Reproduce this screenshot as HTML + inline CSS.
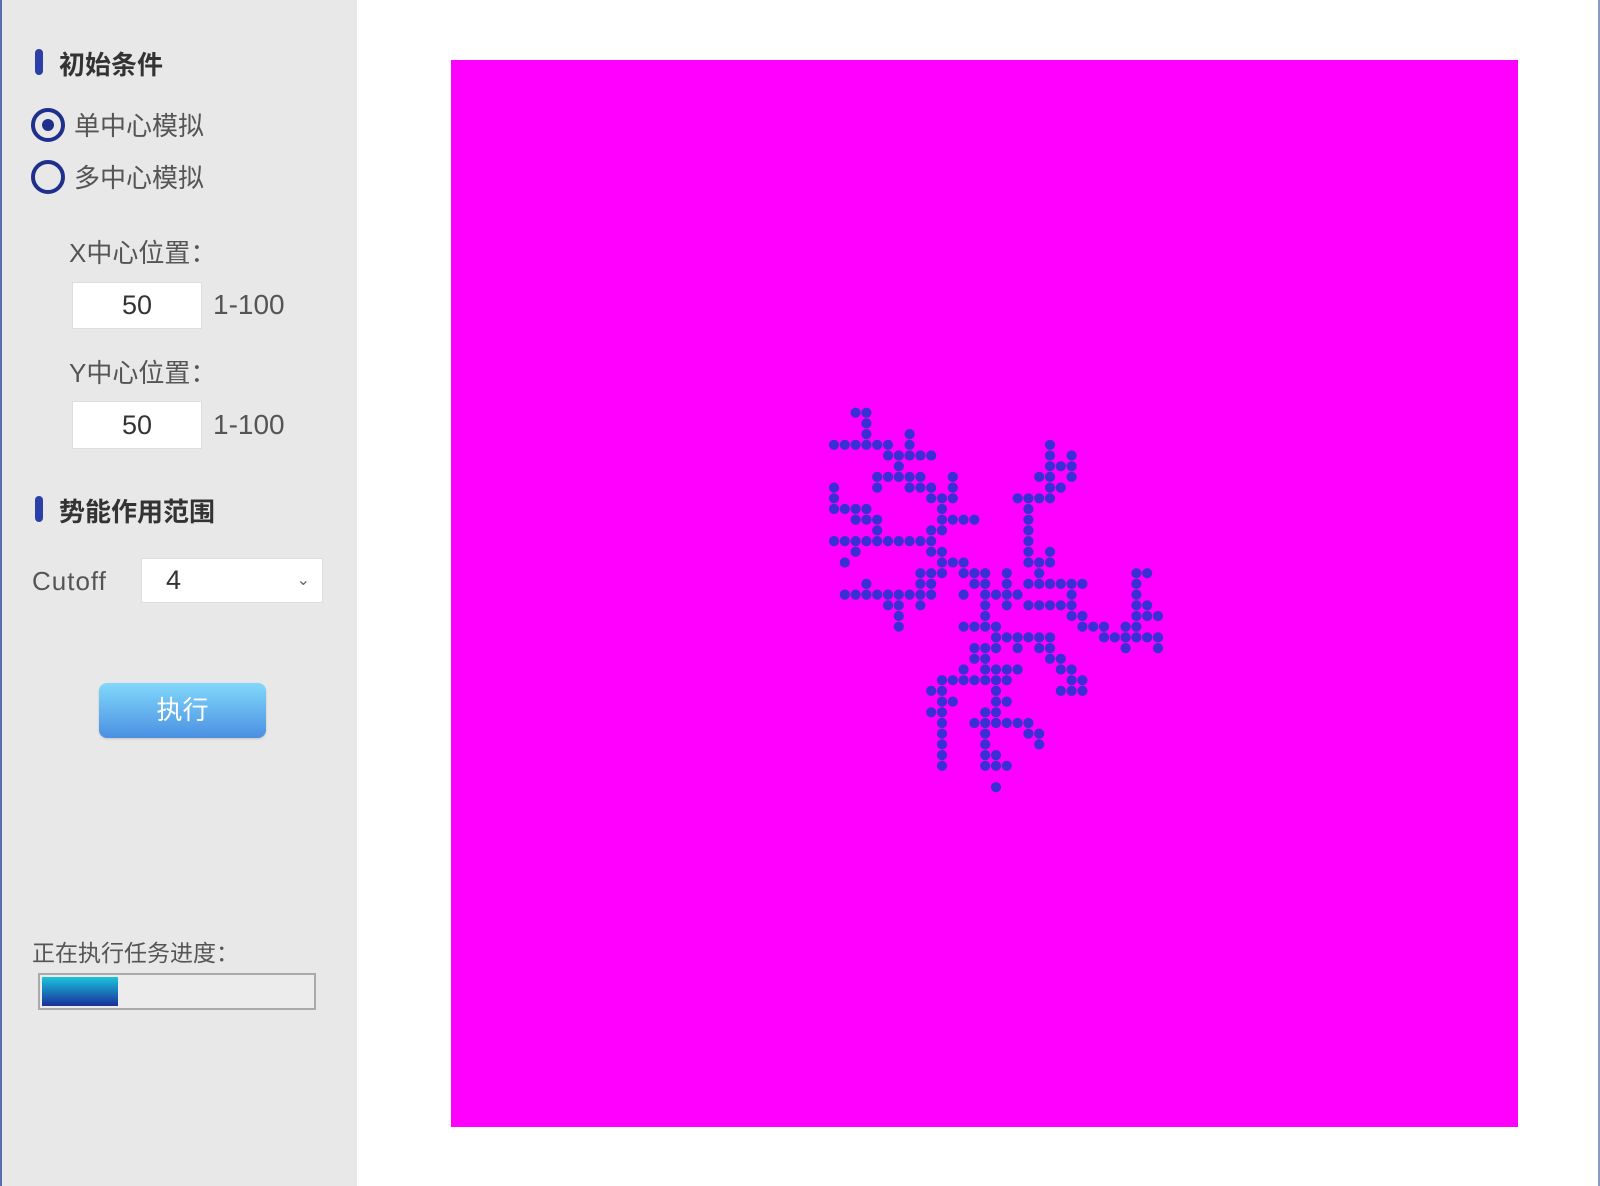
<!DOCTYPE html>
<html><head><meta charset="utf-8">
<style>
html,body{margin:0;padding:0;}
body{width:1600px;height:1186px;position:relative;background:#fff;overflow:hidden;font-family:"Liberation Sans","Noto Sans CJK SC",sans-serif;}
#side{position:absolute;left:0;top:0;width:357px;height:1186px;background:#e8e8e8;border-left:2px solid #5a6bb0;box-sizing:border-box;}
.abs{position:absolute;white-space:nowrap;}
.bar{position:absolute;left:33px;width:8px;height:26px;background:#2a3fa8;border-radius:4px;}
.h{font-weight:bold;font-size:26px;color:#333;}
.t{font-size:26px;color:#555;}
.radio{position:absolute;width:26px;height:26px;border:4px solid #1e2f8c;border-radius:50%;}
.inp{position:absolute;background:#fff;border:1px solid #ddd;font-size:27px;color:#333;text-align:center;box-sizing:border-box;}
#mag{position:absolute;left:451px;top:60px;width:1067px;height:1067px;background:#ff00ff;}
</style></head><body>
<div id="side">
  <div class="bar" style="top:49px"></div>
  <div class="abs h" style="left:57px;top:45px">初始条件</div>
  <div class="radio" style="left:29px;top:108px"><div style="position:absolute;left:7px;top:7px;width:12px;height:12px;border-radius:50%;background:#1e2f8c"></div></div>
  <div class="abs t" style="left:72px;top:106px">单中心模拟</div>
  <div class="radio" style="left:29px;top:160px"></div>
  <div class="abs t" style="left:72px;top:158px">多中心模拟</div>
  <div class="abs t" style="left:67px;top:233px">X中心位置：</div>
  <div class="inp" style="left:70px;top:282px;width:130px;height:47px;line-height:45px">50</div>
  <div class="abs t" style="left:211px;top:289px;font-size:28px">1-100</div>
  <div class="abs t" style="left:67px;top:353px">Y中心位置：</div>
  <div class="inp" style="left:70px;top:401px;width:130px;height:48px;line-height:46px">50</div>
  <div class="abs t" style="left:211px;top:409px;font-size:28px">1-100</div>
  <div class="bar" style="top:496px"></div>
  <div class="abs h" style="left:57px;top:492px">势能作用范围</div>
  <div class="abs t" style="left:30px;top:566px;letter-spacing:1px">Cutoff</div>
  <div class="inp" style="left:139px;top:558px;width:182px;height:45px;line-height:43px;text-align:left;padding-left:24px">4<span style="position:absolute;right:12px;top:0;font-size:16px;color:#666">&#8964;</span></div>
  <div class="abs" style="left:97px;top:683px;width:167px;height:55px;border-radius:8px;background:linear-gradient(#82d8fb,#4a90e2);color:#fff;font-size:26px;text-align:center;line-height:55px;box-shadow:0 1px 2px rgba(0,0,0,.15)">执行</div>
  <div class="abs" style="left:30px;top:934px;font-size:23px;color:#555">正在执行任务进度：</div>
  <div class="abs" style="left:36px;top:973px;width:278px;height:37px;border:2px solid #aaa;background:#ececec;box-sizing:border-box">
    <div style="position:absolute;left:2px;top:2px;width:76px;height:29px;background:linear-gradient(#1bc4dc,#1a2f9a)"></div>
  </div>
</div>
<div style="position:absolute;right:0;top:0;width:2px;height:1186px;background:#8a9ac4"></div>
<div id="mag"></div>
<svg id="dots" width="1600" height="1186" style="position:absolute;left:0;top:0"></svg>
<script>
var rows={0:[2,3],1:[3],2:[3,7],3:[0,1,2,3,4,5,7,20],4:[5,6,7,8,9,20,22],5:[6,20,21,22],
6:[4,5,6,7,8,11,19,20,22],7:[0,4,7,8,9,11,20,21],8:[0,9,10,11,17,18,19,20],9:[0,1,2,3,10,18],
10:[2,3,4,10,11,12,13,18],11:[4,9,10,18],12:[0,1,2,3,4,5,6,7,8,9,18],13:[2,9,10,18,20],
14:[1,10,11,12,18,19,20],15:[8,9,10,12,13,14,16,19,28,29],16:[3,8,9,13,14,16,18,19,20,21,22,23,28],
17:[1,2,3,4,5,6,7,8,9,12,14,15,16,17,22,28],18:[5,6,8,14,16,18,19,20,21,22,28,29],
19:[6,14,22,23,28,29,30],20:[6,12,13,14,15,23,24,25,27,28],21:[15,16,17,18,19,20,25,26,27,28,29,30],
22:[13,14,15,17,19,20,27,30],23:[13,14,20,21],24:[12,14,15,16,17,21,22],25:[10,11,12,13,14,15,16,22,23],
26:[9,10,15,21,22,23],27:[10,11,15,16],28:[9,10,14,15],29:[10,13,14,15,16,17,18],30:[10,14,18,19],
31:[10,14,19],32:[10,14,15],33:[10,14,15,16],35:[15]};
var s='';
for(var r in rows){rows[r].forEach(function(c){s+='<circle cx="'+(834+c*10.8).toFixed(1)+'" cy="'+(412.7+r*10.7).toFixed(1)+'" r="5.1" fill="#3a2fd2"/>';});}
document.getElementById('dots').innerHTML=s;
</script>
</body></html>
